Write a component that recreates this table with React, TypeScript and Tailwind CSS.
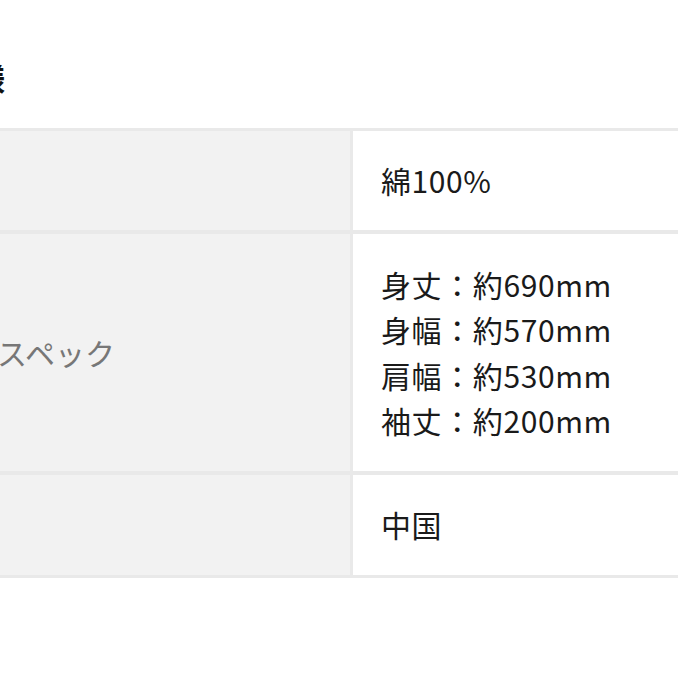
import React from 'react';

const rows: { label: string; value: string[]; height: string }[] = [
  { label: '素材', value: ['綿100%'], height: 'h-[99px]' },
  {
    label: 'サイズスペック',
    value: ['身丈：約690mm', '身幅：約570mm', '肩幅：約530mm', '袖丈：約200mm'],
    height: 'h-[237px]',
  },
  { label: '原産国', value: ['中国'], height: 'h-[100px]' },
];

export default function App() {
  return (
    <div
      className="w-[678px] h-[678px] overflow-hidden bg-white"
      style={{ fontFamily: '"Noto Sans CJK JP", "Noto Sans", sans-serif' }}
    >
      {/* Title */}
      <div className="pt-[54px] h-[128px] flex">
        <div className="w-[200px] -ml-[195px] text-right text-[32px] font-bold leading-[48px] text-[#111]">
          商品仕様
        </div>
      </div>

      {/* Spec table */}
      <div className="-ml-[128px] w-[900px] bg-[#e9e9e9] py-[3px] flex flex-col gap-[4px]">
        {rows.map((row) => (
          <div key={row.label} className={`flex gap-[3px] ${row.height}`}>
            <div className="w-[478px] bg-[#f2f2f2] pl-[36px] flex items-center text-[30px] text-[#777]">
              {row.label}
            </div>
            <div className="flex-1 bg-white pl-[28px] flex flex-col justify-center text-[30px] tracking-[0.02em] leading-[45.5px] text-[#1a1a1a]">
              {row.value.map((v) => (
                <div key={v}>{v}</div>
              ))}
            </div>
          </div>
        ))}
      </div>
    </div>
  );
}
